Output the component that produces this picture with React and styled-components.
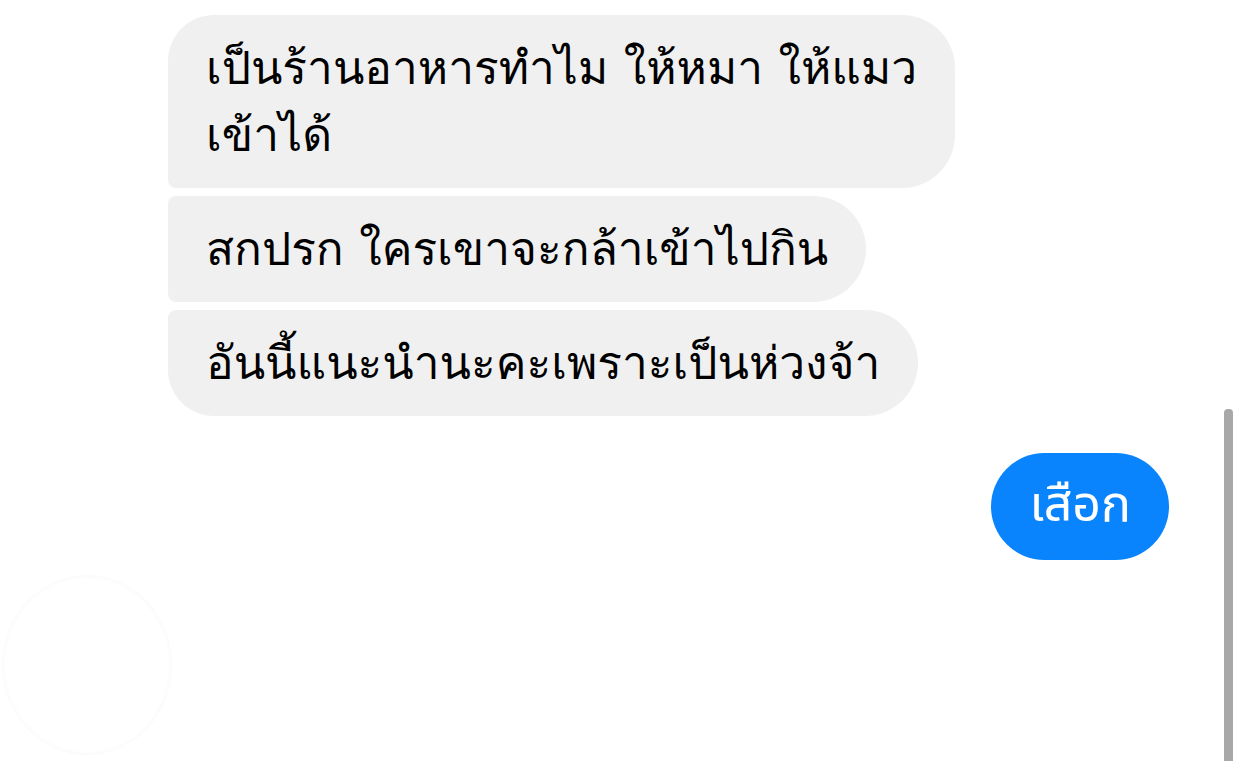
import React from "react";
import styled, { createGlobalStyle } from "styled-components";

const Global = createGlobalStyle`
  html, body { margin: 0; padding: 0; background: #ffffff; }
  body { width: 1242px; height: 761px; overflow: hidden; }
`;

const Screen = styled.div`
  position: relative;
  width: 1242px;
  height: 761px;
  background: #ffffff;
  overflow: hidden;
`;

const Thread = styled.div`
  display: flex;
  flex-direction: column;
  padding: 15px 73px 0 168px;
`;

const Group = styled.div`
  display: flex;
  flex-direction: column;
  align-items: ${(p) => (p.$mine ? "flex-end" : "flex-start")};
  gap: 8px;
  margin-top: ${(p) => p.$gapTop || 0}px;
`;

const Bubble = styled.div`
  box-sizing: border-box;
  max-width: 800px;
  padding: 19px 38px 20px;
  font-family: "Loma", "Noto Sans Thai Looped", sans-serif;
  font-size: 46px;
  line-height: 67px;
  color: #000000;
  background: #f0f0f0;
  border-radius: ${(p) => p.$radius};
`;

const Line = styled.span`
  white-space: nowrap;
`;

const MyBubble = styled.div`
  box-sizing: border-box;
  padding: 20px 38px;
  font-family: "Noto Sans Thai", "Noto Sans", sans-serif;
  font-size: 50px;
  line-height: 67px;
  color: #ffffff;
  background: #0a84fd;
  border-radius: 54px;
`;

const Scrollbar = styled.div`
  position: absolute;
  right: 9px;
  top: 409px;
  bottom: 0;
  width: 9px;
  background: #a8a8a8;
  border-radius: 4px 4px 0 0;
`;

const Avatar = styled.div`
  position: absolute;
  left: 2px;
  top: 575px;
  width: 170px;
  height: 180px;
  border-radius: 50%;
  box-shadow: inset 0 0 6px rgba(0, 0, 0, 0.04);
`;

export default function App() {
  return (
    <Screen>
      <Global />
      <Thread>
        <Group>
          <Bubble $radius="46px 53px 53px 8px">
            <Line>เป็นร้านอาหารทำไม ให้หมา ให้แมว</Line>
            <br />
            เข้าได้
          </Bubble>
          <Bubble $radius="8px 53px 53px 8px">สกปรก ใครเขาจะกล้าเข้าไปกิน</Bubble>
          <Bubble $radius="8px 53px 53px 46px">อันนี้แนะนำนะคะเพราะเป็นห่วงจ้า</Bubble>
        </Group>
        <Group $mine $gapTop={37}>
          <MyBubble>เสือก</MyBubble>
        </Group>
      </Thread>
      <Avatar />
      <Scrollbar />
    </Screen>
  );
}
